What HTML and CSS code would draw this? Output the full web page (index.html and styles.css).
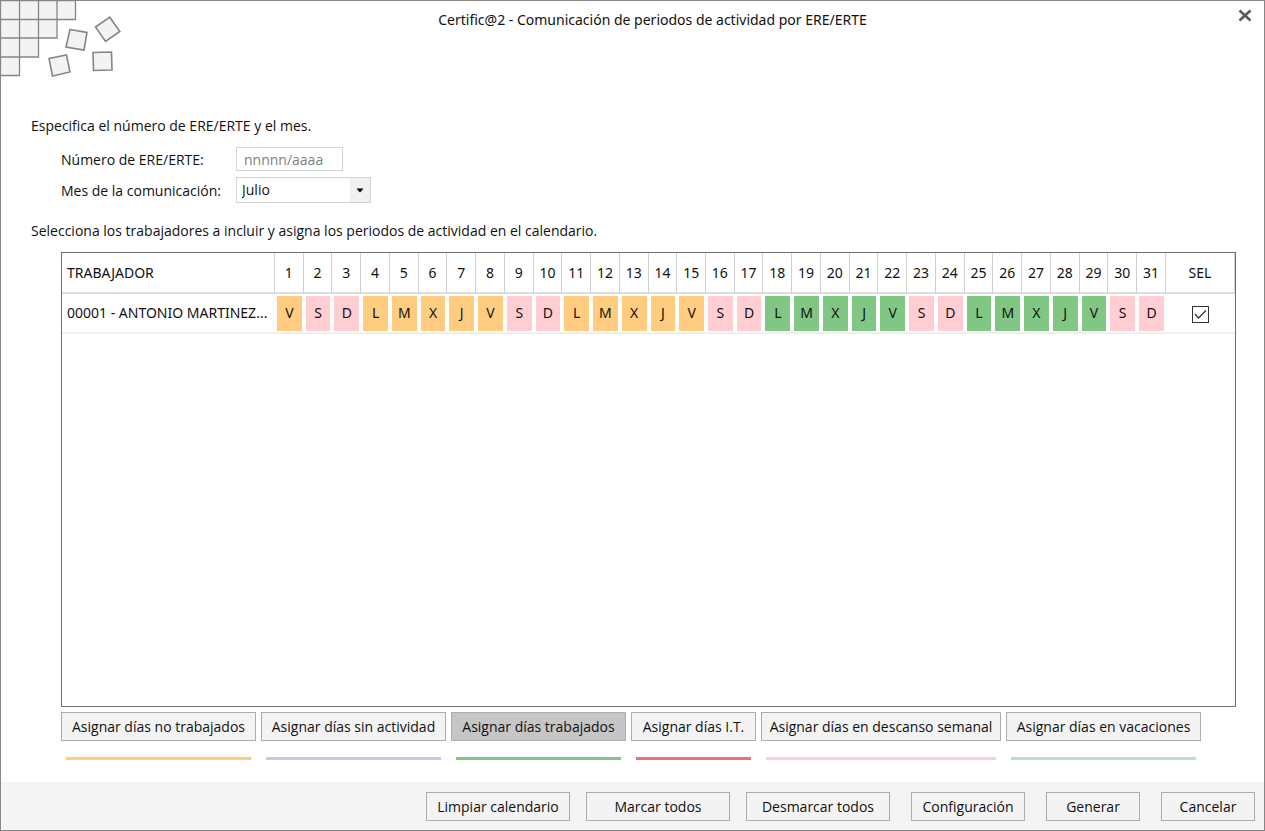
FILE: index.html
```html
<!DOCTYPE html>
<html lang="es">
<head>
<meta charset="utf-8">
<title>Certific@2</title>
<link rel="stylesheet" href="styles.css">
</head>
<body>
<main class="dialog">
  <svg class="decor" width="130" height="80" viewBox="0 0 130 80" aria-hidden="true">
    <g fill="#f3f3f3" stroke="#868686" stroke-width="1.300">
      <path d="M0.5 0.5H75.5V19.5H57V38H38.500V57H19.500V75.500H0.500Z"/>
      <path d="M19.500 0V57M38.500 0V38M57 0V19M0 19.500H57M0 38H38.500M0 57H19.500" fill="none"/>
      <g stroke-width="1.600">
        <path d="M95.500 27L109.800 17.200L119.800 31.500L105.500 41.500Z"/>
        <path d="M70 29.500L87 32.500L84 50L66 47Z"/>
        <path d="M49 58.500L66.500 55L70 72L52.500 76Z"/>
        <path d="M93 52.500L111.500 52L112 70L93.500 70.500Z"/>
      </g>
    </g>
  </svg>
  <header class="titlebar">
    <h1 class="title">Certific@2 - Comunicación de periodos de actividad por ERE/ERTE</h1>
    <button class="close" type="button" aria-label="Cerrar">
      <svg width="14" height="14" viewBox="0 0 14 14" aria-hidden="true"><path d="M1.500 2.500L12.500 12.500M12.500 2.500L1.500 12.500" stroke="#5a5a5a" stroke-width="2.600"/></svg>
    </button>
  </header>
  <section class="content">
    <p class="intro">Especifica el número de ERE/ERTE y el mes.</p>
    <div class="form">
      <label for="ere">Número de ERE/ERTE:</label>
      <input class="field" id="ere" type="text" placeholder="nnnnn/aaaa">
      <label for="mes">Mes de la comunicación:</label>
      <div class="month">
        <select class="select" id="mes"><option>Julio</option></select>
        <svg class="arrow" width="20" height="24" viewBox="0 0 20 24" aria-hidden="true"><path d="M0 0H20V24H0Z" fill="#f0f0f0"/><path d="M6.500 10.500H13.500L10 14.500Z" fill="#000"/></svg>
      </div>
    </div>
    <p class="intro">Selecciona los trabajadores a incluir y asigna los periodos de actividad en el calendario.</p>
    <div class="calendar">
      <table class="grid">
        <colgroup><col class="col-name"><col span="31"><col class="col-sel"></colgroup>
        <thead>
          <tr><th class="name">TRABAJADOR</th><th>1</th><th>2</th><th>3</th><th>4</th><th>5</th><th>6</th><th>7</th><th>8</th><th>9</th><th>10</th><th>11</th><th>12</th><th>13</th><th>14</th><th>15</th><th>16</th><th>17</th><th>18</th><th>19</th><th>20</th><th>21</th><th>22</th><th>23</th><th>24</th><th>25</th><th>26</th><th>27</th><th>28</th><th>29</th><th>30</th><th>31</th><th>SEL</th></tr>
        </thead>
        <tbody>
          <tr>
            <td class="name">00001 - ANTONIO MARTINEZ...</td>
            <td><span class="day off">V</span></td><td><span class="day rest">S</span></td><td><span class="day rest">D</span></td>
            <td><span class="day off">L</span></td><td><span class="day off">M</span></td><td><span class="day off">X</span></td><td><span class="day off">J</span></td><td><span class="day off">V</span></td><td><span class="day rest">S</span></td><td><span class="day rest">D</span></td>
            <td><span class="day off">L</span></td><td><span class="day off">M</span></td><td><span class="day off">X</span></td><td><span class="day off">J</span></td><td><span class="day off">V</span></td><td><span class="day rest">S</span></td><td><span class="day rest">D</span></td>
            <td><span class="day work">L</span></td><td><span class="day work">M</span></td><td><span class="day work">X</span></td><td><span class="day work">J</span></td><td><span class="day work">V</span></td><td><span class="day rest">S</span></td><td><span class="day rest">D</span></td>
            <td><span class="day work">L</span></td><td><span class="day work">M</span></td><td><span class="day work">X</span></td><td><span class="day work">J</span></td><td><span class="day work">V</span></td><td><span class="day rest">S</span></td><td><span class="day rest">D</span></td>
            <td>
              <label class="tick">
                <input class="box" type="checkbox" checked aria-label="Seleccionar trabajador">
                <svg class="mark" width="17" height="17" viewBox="0 0 17 17" aria-hidden="true"><path d="M3 8L6.500 12L14 4.500" fill="none" stroke="#333" stroke-width="1.300"/></svg>
              </label>
            </td>
          </tr>
        </tbody>
      </table>
    </div>
    <div class="assign">
      <div class="option"><button class="btn w195" type="button">Asignar días no trabajados</button><span class="bar off"></span></div>
      <div class="option"><button class="btn w185" type="button">Asignar días sin actividad</button><span class="bar idle"></span></div>
      <div class="option"><button class="btn w175 active" type="button">Asignar días trabajados</button><span class="bar work"></span></div>
      <div class="option"><button class="btn w125" type="button">Asignar días I.T.</button><span class="bar sick"></span></div>
      <div class="option"><button class="btn w240" type="button">Asignar días en descanso semanal</button><span class="bar rest"></span></div>
      <div class="option"><button class="btn w195" type="button">Asignar días en vacaciones</button><span class="bar holiday"></span></div>
    </div>
  </section>
  <footer class="footer">
    <div class="group">
      <button class="btn w144" type="button">Limpiar calendario</button>
      <button class="btn w144" type="button">Marcar todos</button>
      <button class="btn w144" type="button">Desmarcar todos</button>
    </div>
    <button class="btn w114" type="button">Configuración</button>
    <button class="btn w94" type="button">Generar</button>
    <button class="btn w94" type="button">Cancelar</button>
  </footer>
</main>
</body>
</html>
```
FILE: styles.css
```css
* { box-sizing: border-box; }

body {
  margin: 0;
  background: #fff;
  color: #111;
  font: 14px/20px "Open Sans", "Noto Sans", sans-serif;
}

button, input, select { font: inherit; color: inherit; }

.dialog {
  position: relative;
  display: flex;
  flex-direction: column;
  min-height: 100vh;
  border: 1px solid #868686;
}

.decor { position: absolute; top: -1px; left: -1px; }

.titlebar {
  display: flex;
  justify-content: center;
  height: 115px;
  padding: 9px 0 0 40px;
}

.title {
  margin: 0;
  font: 14px/20px "Noto Sans", sans-serif;
}

.close {
  position: absolute;
  top: 7px;
  right: 12px;
  display: flex;
  padding: 0;
  border: 0;
  background: none;
}

.content {
  flex: 1;
  display: flex;
  flex-direction: column;
  padding: 0 28px 22px 30px;
}

.intro { margin: 0; }

.form {
  display: grid;
  grid-template-columns: 175px 135px;
  row-gap: 6px;
  align-items: center;
  padding: 11px 0 18px 30px;
}

.form label { padding-top: 2px; }

.field {
  width: 107px;
  height: 24px;
  padding: 0 7px;
  border: 1px solid #d4d4d4;
}

.field::placeholder { color: #808080; opacity: 1; }

.month { position: relative; display: flex; }

.select {
  appearance: none;
  width: 135px;
  height: 26px;
  padding: 0 24px 0 5px;
  border: 1px solid #d4d4d4;
  border-radius: 0;
  background: #fff;
}

.arrow { position: absolute; top: 1px; right: 1px; pointer-events: none; }

.calendar {
  flex: 1;
  margin: 11px 0 5px 30px;
  border: 1px solid #6e6e6e;
}

.grid {
  width: 100%;
  table-layout: fixed;
  border-collapse: separate;
  border-spacing: 0;
  font: 14px/20px "Noto Sans", sans-serif;
}

.col-name { width: 213px; }
.col-sel { width: 69px; }

.grid th {
  height: 41px;
  padding: 0;
  border-right: 1px solid #d0d0d0;
  border-bottom: 2px solid #dedede;
  font-weight: 400;
  text-align: center;
}

.grid td {
  height: 40px;
  padding: 2px 2px 1px;
  border-bottom: 2px solid #f0f0f0;
  text-align: center;
}

.grid .name { padding: 0 0 0 5px; text-align: left; white-space: nowrap; }

.day { display: block; padding: 7px 0 8px; }

.off { background: #ffcc80; }
.rest { background: #ffcdd2; }
.work { background: #81c784; }
.idle { background: #d1c4e9; }
.sick { background: #e57373; }
.holiday { background: #b2dfdb; }

.tick { position: relative; display: inline-flex; vertical-align: middle; }

.box {
  appearance: none;
  width: 17px;
  height: 17px;
  margin: 0;
  border: 1px solid #333;
  background: #fff;
}

.mark { position: absolute; inset: 0; visibility: hidden; pointer-events: none; }
.box:checked + .mark { visibility: visible; }

.assign { display: flex; gap: 5px; padding-left: 30px; }

.option { display: flex; flex-direction: column; gap: 16px; }

.bar { height: 3px; margin: 0 5px; }

.btn {
  height: 29px;
  padding: 0;
  border: 1px solid #adadad;
  background: #f3f3f3;
  white-space: nowrap;
}

.active { background: #c6c6c6; }

.w94 { width: 94px; }
.w114 { width: 114px; }
.w125 { width: 125px; }
.w144 { width: 144px; }
.w175 { width: 175px; }
.w185 { width: 185px; }
.w195 { width: 195px; }
.w240 { width: 240px; }

.footer {
  display: flex;
  justify-content: flex-end;
  gap: 21px;
  padding: 10px 9px 9px;
  background: #f4f4f4;
}

.group { display: flex; gap: 16px; }
```
